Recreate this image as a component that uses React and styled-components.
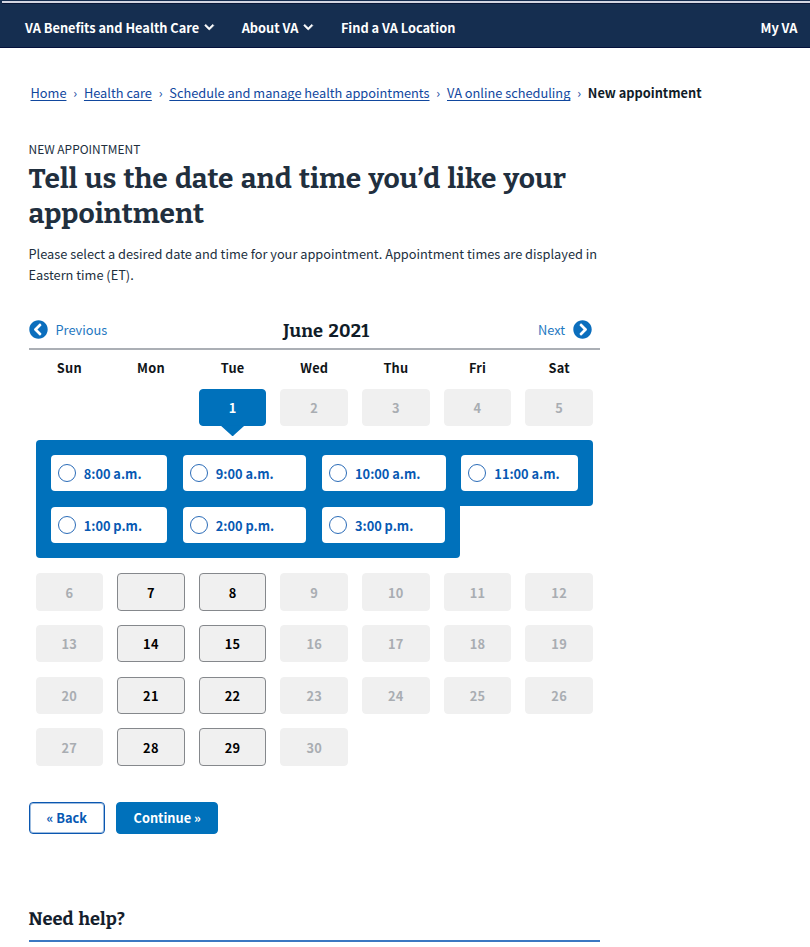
import React from 'react';
import styled, { createGlobalStyle } from 'styled-components';
import { FaChevronCircleLeft, FaChevronCircleRight, FaChevronDown } from 'react-icons/fa';

const SANS = '"Noto Sans CJK JP", "Open Sans", sans-serif';
const SERIF = 'Bitter, "DejaVu Serif Condensed", "DejaVu Serif", serif';
const BLUE = '#0071bb';
const INK = '#212f3e';

const GlobalStyle = createGlobalStyle`
  *, *::before, *::after { box-sizing: border-box; }
  body { margin: 0; background: #fff; color: ${INK}; font: 400 12.79px/21.5px ${SANS}; }
  h1, h2, p, ol { margin: 0; padding: 0; }
  button { font: inherit; margin: 0; }
`;

const Page = styled.div`
  width: 810px;
  height: 947px;
  overflow: hidden;
`;

const TopBar = styled.header`
  height: 48px;
  padding-top: 1px;
  background: #152e50;
  border-bottom: 1px solid #04123c;
`;

const TopRule = styled.div`
  height: 3px;
  margin-left: 2px;
  background: #d3d6e2;
  border-bottom: 1px solid #0a1838;
`;

const Nav = styled.nav`
  display: flex;
  align-items: center;
  height: 47px;
  padding: 0 12.5px 0 25px;
  color: #fff;
  font-weight: 700;
`;

const NavItem = styled.a`
  display: flex;
  align-items: center;
  gap: 5px;
  margin-right: 27px;
  white-space: nowrap;

  &:last-child { margin: 0 0 0 auto; }
  svg { width: 10.5px; height: 10.5px; stroke: #fff; stroke-width: 30; }
`;

const Breadcrumbs = styled.ol`
  display: flex;
  list-style: none;
  padding: 34px 0 0 30.5px;
  white-space: nowrap;
`;

const Crumb = styled.li`
  color: #11479e;

  a {
    text-decoration: underline;
    text-decoration-thickness: 1px;
    text-underline-offset: 2px;
    text-decoration-skip-ink: none;
  }
  &:not(:last-child)::after { content: '›'; margin: 0 6.8px; }
  &:last-child { color: #101c28; font-weight: 700; }
`;

const Main = styled.main`
  width: 571.5px;
  margin-left: 28.5px;
`;

const Eyebrow = styled.div`
  margin-top: 35px;
  font-size: 11.95px;
  line-height: 20px;
`;

const Title = styled.h1`
  font: 700 28.1px/35px ${SERIF};
  margin-top: 2.3px;
  white-space: nowrap;
  word-spacing: 2.2px;
`;

const Intro = styled.p`
  margin-top: 11.9px;
`;

const MonthBar = styled.div`
  display: grid;
  grid-template-columns: 1fr auto 1fr;
  align-items: center;
  height: 39px;
  margin-top: 25px;
  padding: 1px 8px 0 0;
  border-bottom: 2px solid #abafb5;
`;

const MonthButton = styled.button`
  display: flex;
  align-items: center;
  gap: 8px;
  padding: 0;
  border: 0;
  background: none;
  color: #1f78c1;
  justify-self: ${p => (p.$end ? 'end' : 'start')};

  svg { width: 19px; height: 19px; color: #0b6ebd; }
`;

const MonthName = styled.h2`
  padding: 2px 0 0 32px;
  font: 700 18.2px/24px ${SERIF};
  letter-spacing: 0.25px;
  word-spacing: 1.6px;
  color: #101c28;
`;

const WeekRow = styled.div`
  display: grid;
  grid-template-columns: repeat(7, 1fr);
  column-gap: 14.1px;
  padding: 0 7.05px;
  margin-bottom: ${p => p.$gap}px;
`;

const Weekday = styled.div`
  height: 39.3px;
  line-height: 36.5px;
  color: #101418;
  font-weight: 700;
  text-align: center;
  letter-spacing: 0.2px;
`;

const Day = styled.button`
  position: relative;
  height: 37.4px;
  padding: 1px 0 0;
  border: 1px solid ${p => (p.$open ? '#85888c' : '#f0f0f0')};
  border-radius: 4px;
  background: #f0f0f0;
  color: ${p => (p.$open ? '#000' : '#a9adb2')};
  font-weight: 700;
  letter-spacing: 0.3px;

  ${p => p.$selected && `
    border-color: ${BLUE};
    background: ${BLUE};
    color: #fff;
    &::after {
      content: '';
      position: absolute;
      left: 50%;
      top: 100%;
      width: 24px;
      height: 11px;
      margin-left: -12px;
      background: ${BLUE};
      clip-path: polygon(0 0, 100% 0, 56% 88%, 50% 100%, 44% 88%);
    }
  `}
`;

const SlotPanel = styled.div`
  margin: 0 7px 15.4px;
`;

const SlotRow = styled.div`
  display: flex;
  width: ${p => (p.$last ? '424.9px' : '100%')};
  padding: ${p => (p.$last ? '1px' : '14.7px')} 15px 14.7px;
  gap: 15.6px;
  border-radius: ${p => (p.$last ? '0 0 4px 4px' : '4px 4px 4px 0')};
  background: ${BLUE};
`;

const Slot = styled.label`
  display: flex;
  align-items: center;
  gap: 8px;
  width: ${p => (p.$edge ? 116.5 : 123.7)}px;
  height: 36.4px;
  padding: 1px 0 0 7.2px;
  border-radius: 4px;
  background: #fff;
  color: #0759b3;
  font-weight: 700;
`;

const Radio = styled.span`
  width: 18px;
  height: 18px;
  margin-top: -1px;
  border: 1px solid #2b6cb8;
  border-radius: 50%;
`;

const Actions = styled.div`
  display: flex;
  gap: 11px;
  margin-top: 36px;
`;

const ActionButton = styled.button`
  width: ${p => p.$width}px;
  height: 32.5px;
  padding: 0;
  border: 1px solid ${p => (p.$primary ? BLUE : '#0a57b0')};
  box-shadow: ${p => (p.$primary ? 'none' : 'inset 0 0 0 1px rgba(10, 87, 176, 0.4)')};
  border-radius: 4px;
  background: ${p => (p.$primary ? BLUE : '#fff')};
  color: ${p => (p.$primary ? '#fff' : '#0759b3')};
  font-weight: 700;
`;

const HelpTitle = styled.h2`
  margin-top: 68.2px;
  height: 40px;
  border-bottom: 2px solid #3b78c2;
  font: 700 18.2px/34px ${SERIF};
  letter-spacing: 0.05px;
  word-spacing: 1.6px;
  color: #14202c;
`;

const crumbs = ['Home', 'Health care', 'Schedule and manage health appointments', 'VA online scheduling'];
const weekdays = ['Sun', 'Mon', 'Tue', 'Wed', 'Thu', 'Fri', 'Sat'];
const openDays = [7, 8, 14, 15, 21, 22, 28, 29];
const slots = [
  ['8:00 a.m.', '9:00 a.m.', '10:00 a.m.', '11:00 a.m.'],
  ['1:00 p.m.', '2:00 p.m.', '3:00 p.m.'],
];

function Week({ start, gap }) {
  return (
    <WeekRow $gap={gap}>
      {weekdays.map((name, i) => {
        const day = start + i;
        if (day < 1 || day > 30) return <span key={name} />;
        return (
          <Day key={name} $open={openDays.includes(day)} $selected={day === 1}>{day}</Day>
        );
      })}
    </WeekRow>
  );
}

export default function App() {
  return (
    <Page>
      <GlobalStyle />
      <TopBar>
        <TopRule />
        <Nav>
          <NavItem>VA Benefits and Health Care <FaChevronDown /></NavItem>
          <NavItem>About VA <FaChevronDown /></NavItem>
          <NavItem>Find a VA Location</NavItem>
          <NavItem>My VA</NavItem>
        </Nav>
      </TopBar>
      <Breadcrumbs>
        {crumbs.map(label => <Crumb key={label}><a>{label}</a></Crumb>)}
        <Crumb>New appointment</Crumb>
      </Breadcrumbs>
      <Main>
        <Eyebrow>NEW APPOINTMENT</Eyebrow>
        <Title>Tell us the date and time you’d like your<br />appointment</Title>
        <Intro>
          Please select a desired date and time for your appointment. Appointment times are displayed in
          Eastern time (ET).
        </Intro>
        <MonthBar>
          <MonthButton><FaChevronCircleLeft />Previous</MonthButton>
          <MonthName>June 2021</MonthName>
          <MonthButton $end>Next<FaChevronCircleRight /></MonthButton>
        </MonthBar>
        <WeekRow $gap={0}>
          {weekdays.map(name => <Weekday key={name}>{name}</Weekday>)}
        </WeekRow>
        <Week start={-1} gap={13.6} />
        <SlotPanel>
          {slots.map((times, row) => (
            <SlotRow key={times[0]} $last={row === 1}>
              {times.map((time, i) => (
                <Slot key={time} $edge={i === 0 || i === 3}><Radio />{time}</Slot>
              ))}
            </SlotRow>
          ))}
        </SlotPanel>
        {[6, 13, 20, 27].map(start => <Week key={start} start={start} gap={start === 27 ? 0 : 14.3} />)}
        <Actions>
          <ActionButton $width={76.5}>« Back</ActionButton>
          <ActionButton $width={102.3} $primary>Continue »</ActionButton>
        </Actions>
        <HelpTitle>Need help?</HelpTitle>
      </Main>
    </Page>
  );
}
